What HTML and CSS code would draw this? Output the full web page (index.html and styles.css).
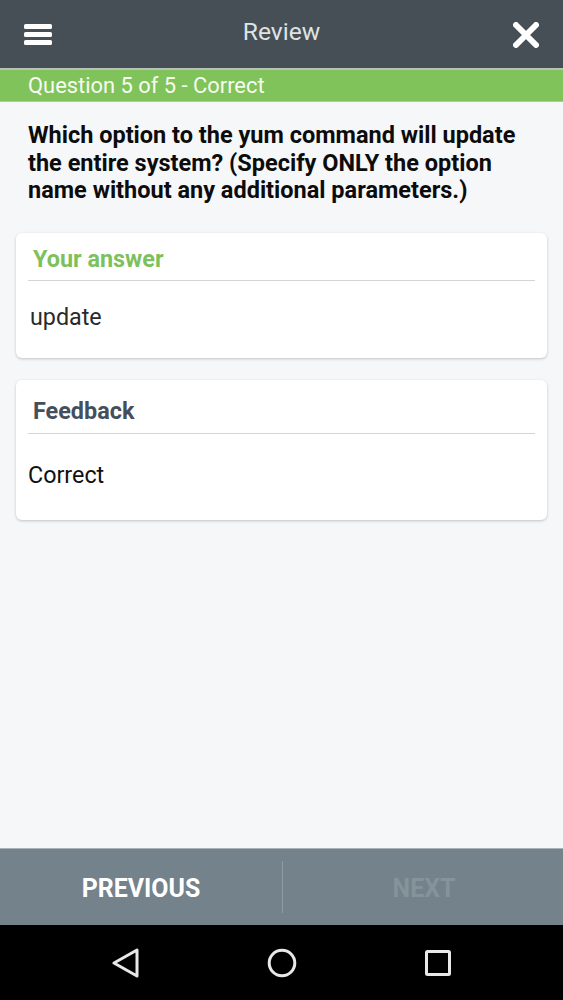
FILE: index.html
```html
<!DOCTYPE html>
<html lang="en">
<head>
<meta charset="utf-8">
<title>Review</title>
<link rel="stylesheet" href="styles.css">
</head>
<body>
<div class="screen">
  <header class="topbar">
    <svg class="icon-menu" width="28" height="22" viewBox="0 0 28 22"><rect x="0" y="0" width="28" height="5" rx="1.5"/><rect x="0" y="8" width="28" height="5" rx="1.5"/><rect x="0" y="16" width="28" height="5" rx="1.5"/></svg>
    <h1 class="title">Review</h1>
    <svg class="icon-close" width="26" height="26" viewBox="0 0 26 26"><path d="M3 3 L23 23 M23 3 L3 23"/></svg>
  </header>
  <div class="status">Question 5 of 5 - Correct</div>
  <main class="content">
    <p class="question">Which option to the yum command will update the entire system? (Specify ONLY the option name without any additional parameters.)</p>
    <section class="card card-answer">
      <h2 class="card-title title-answer">Your answer</h2>
      <p class="answer">update</p>
    </section>
    <section class="card card-feedback">
      <h2 class="card-title title-feedback">Feedback</h2>
      <p class="feedback">Correct</p>
    </section>
  </main>
  <nav class="pager">
    <div class="pager-btn active">PREVIOUS</div>
    <div class="pager-divider"></div>
    <div class="pager-btn disabled">NEXT</div>
  </nav>
  <footer class="sysbar">
    <svg width="28" height="30" viewBox="0 0 28 30"><path class="sys" d="M25 2 V28 L2 15 Z"/></svg>
    <svg width="30" height="30" viewBox="0 0 30 30"><circle class="sys" cx="15" cy="15" r="12.8"/></svg>
    <svg width="28" height="28" viewBox="0 0 28 28"><rect class="sys" x="2.5" y="2.5" width="23" height="23" rx="1"/></svg>
  </footer>
</div>
</body>
</html>
```
FILE: styles.css
```css
* { box-sizing: border-box; }
html, body { margin: 0; padding: 0; }
body { font-family: Roboto, "Liberation Sans", sans-serif; background: #f6f7f9; }
.screen { width: 563px; height: 1000px; display: flex; flex-direction: column; overflow: hidden; }

.topbar { height: 70px; flex: none; background: #474f56; border-bottom: 2px solid #b9c3b5; display: flex; align-items: center; justify-content: space-between; padding: 2px 24px 0 24px; position: relative; }
.icon-menu { fill: #fff; }
.icon-close { stroke: #fff; stroke-width: 6; stroke-linecap: round; fill: none; }
.title { position: absolute; left: 0; right: 0; top: 15px; margin: 0; text-align: center; font-size: 24.6px; line-height: 33px; font-weight: 400; color: #dfe3e3; }

.status { height: 32px; flex: none; background: #80c35a; color: #f6fbf0; font-size: 21.9px; line-height: 31px; padding-left: 28px; border-bottom: 1px solid #a5d58a; }

.content { flex: 1; padding: 20px 16px 0; min-height: 0; }
.question { margin: 0 12px 28px; font-size: 23.5px; line-height: 27.5px; font-weight: 700; color: #0c0c0c; }

.card { background: #fff; border-radius: 6px; box-shadow: 0 1px 3px rgba(0,0,0,.22); padding: 0 12px; }
.card-answer { height: 125px; margin-bottom: 22px; }
.card-feedback { height: 140px; }
.card-title { margin: 0; font-size: 23.4px; font-weight: 700; padding-left: 5px; border-bottom: 1px solid #d4d6d6; }
.title-answer { height: 48px; line-height: 53px; color: #7cc15c; }
.title-feedback { height: 54px; line-height: 62px; color: #454f5c; }
.answer { margin: 0; padding: 21px 2px 0; font-size: 23.3px; line-height: 30px; color: #2a2a2a; }
.feedback { margin: 0; padding: 26px 0 0; font-size: 23.3px; line-height: 30px; color: #111; }

.pager { height: 77px; flex: none; background: #73828b; border-top: 1px solid #aab3b8; display: flex; align-items: center; }
.pager-btn { text-align: center; font-size: 24.9px; line-height: 30px; font-weight: 700; padding-top: 3px; }
.active { flex: none; width: 282px; color: #fff; }
.disabled { flex: 1; padding-left: 2px; color: #85939b; }
.pager-divider { width: 1px; height: 52px; background: #8d9aa2; }

.sysbar { height: 75px; flex: none; background: #000; display: flex; align-items: center; gap: 127px; padding: 0 0 0 112px; }
.sys { fill: none; stroke: #e8e8e8; stroke-width: 3; stroke-linejoin: round; }
```
